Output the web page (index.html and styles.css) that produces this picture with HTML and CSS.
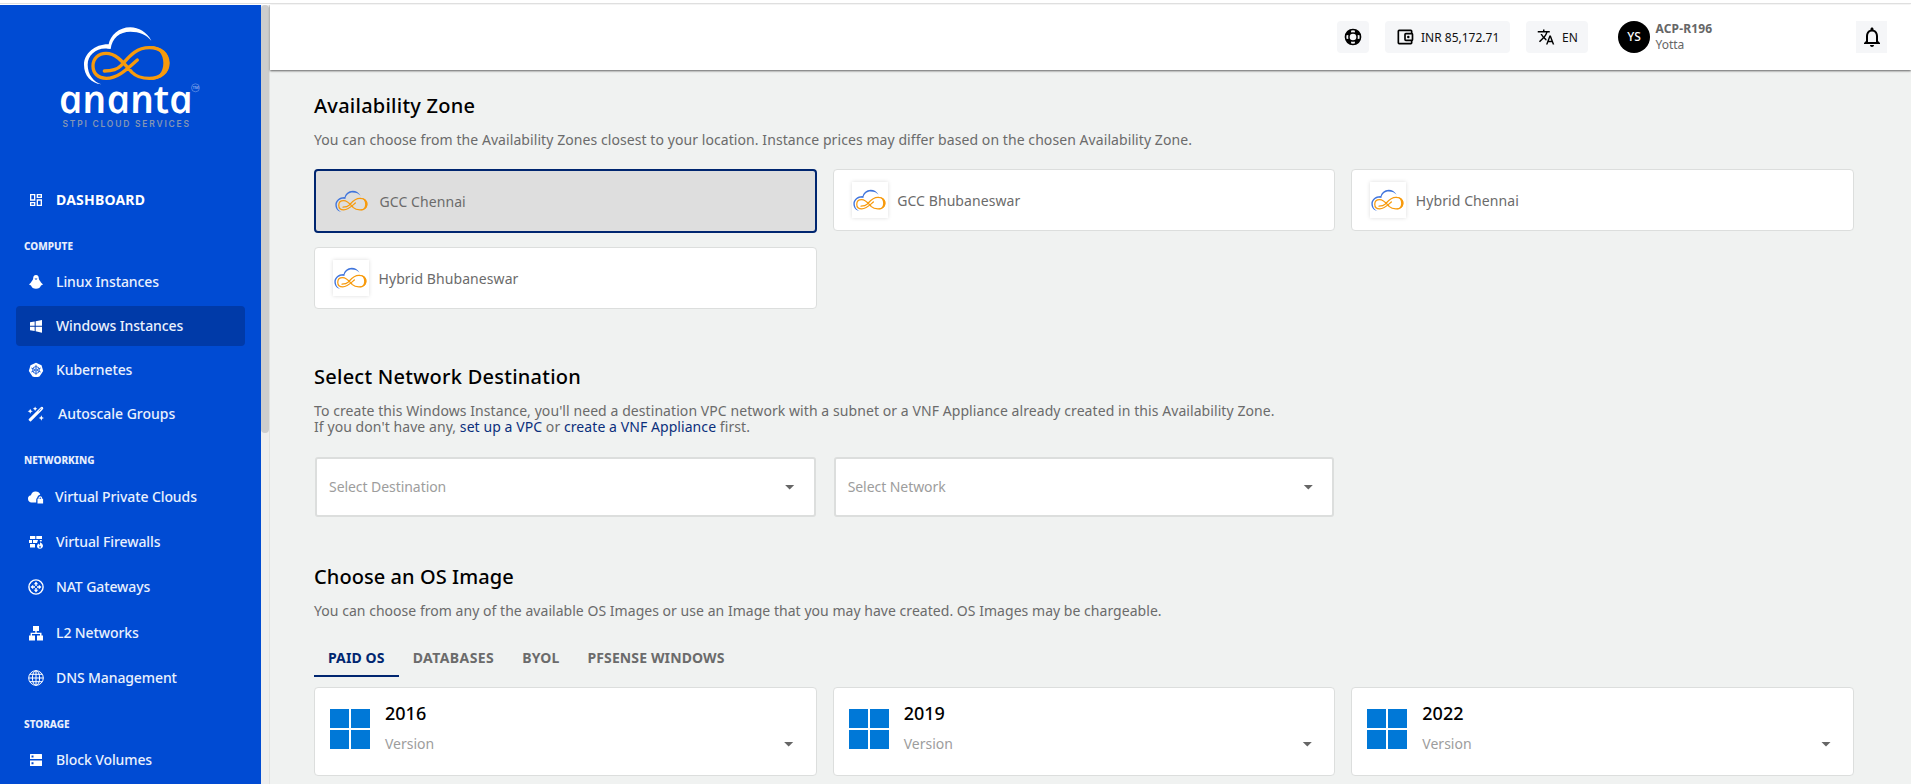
FILE: index.html
```html
<!DOCTYPE html>
<html lang="en">
<head>
<meta charset="utf-8">
<title>Ananta Cloud - Windows Instances</title>
<link rel="stylesheet" href="styles.css">
</head>
<body>
<svg class="defs" width="0" height="0">
  <symbol id="mark" viewBox="248 76 264 180">
    <path fill="var(--cloud)" d="M453 120C440 95 415 80 390 80C355 80 330 105 325 131C285 130 251 158 251 192C251 225 272 247 303 251C280 243 262 222 262 192C262 162 290 140 322 144L331 145C335 112 358 93 390 93C417 93 438 102 453 120Z"/>
    <path fill="none" stroke="#f79a0c" stroke-width="10" stroke-linecap="round" d="M411 178C385 200 355 233 318 233C292 233 278 217 278 196C278 174 294 158 317 158C350 158 372 190 395 215C408 228 425 233 447 233C480 233 502 213 502 187C502 160 480 141 447 141C405 141 385 170 362 195C350 208 335 211 312 211"/>
    <path fill="#f79a0c" d="M447 136C485 136 508 158 508 187C508 216 485 238 447 238C475 232 489 213 489 187C489 161 475 143 447 136Z"/>
  </symbol>
  <symbol id="win11" viewBox="0 0 40 40"><path fill="#0078d7" d="M0 0h19v19H0zM21 0h19v19H21zM0 21h19v19H0zM21 21h19v19H21z"/></symbol>
</svg>
<div class="topline"></div>
<div class="app">
  <aside class="sidebar">
    <div class="nav">
      <div class="brand">
        <svg class="brand-mark"><use href="#mark"/></svg>
        <svg class="brand-text" width="150" height="46" viewBox="55 84 150 46">
          <text class="wordmark" transform="translate(61 112.500) skewX(12)" x="0" y="0" textLength="134" lengthAdjust="spacingAndGlyphs">ananta</text>
          <circle cx="195.500" cy="87.800" r="4" fill="none" stroke="#7da2e8" stroke-width=".6"/>
          <text class="tm" x="195.500" y="89.300" text-anchor="middle">TM</text>
          <text class="tagline" x="62.500" y="126.500" textLength="126.500">STPI CLOUD SERVICES</text>
        </svg>
      </div>
      <a class="item dash"><svg viewBox="0 0 24 24"><path d="M19 5v2h-4V5h4M9 5v6H5V5h4m10 8v6h-4v-6h4M9 17v2H5v-2h4M21 3h-8v6h8V3zM11 3H3v10h8V3zm10 8h-8v10h8V11zm-10 4H3v6h8v-6z"/></svg>DASHBOARD</a>
      <h4 class="group compute">COMPUTE</h4>
      <div class="list">
        <a class="item"><svg viewBox="0 0 16 16"><path d="M8 1C6 1 5.200 2.500 5.200 4.200C5.200 6 3.500 7 3 8.500L1 10.500L3 11.500C3.600 13.500 5.500 14.800 8 14.800S12.400 13.500 13 11.500L15 10.500L13 8.500C12.500 7 10.800 6 10.800 4.200C10.800 2.500 10 1 8 1Z"/><path class="cut" d="M6.500 4.500h3L8 6z"/></svg>Linux Instances</a>
        <a class="item active"><svg viewBox="0 0 24 24"><path d="M3 6.500L10 5.200V11.500H3ZM11.500 4.900L21 3V11.500H11.500ZM3 13H10V19.500L3 18.500ZM11.500 13H21V22L11.500 20Z"/></svg>Windows Instances</a>
        <a class="item"><svg viewBox="0 0 16 16"><path d="M8 .8L13.500 3.300L15.200 9L11.500 14.500Q8 15.500 4.500 14.500L.8 9L2.500 3.300Z"/><g class="cutline"><circle cx="8" cy="8" r="3.400"/><circle cx="8" cy="8" r="1"/><path d="M8 2.800V7M8 9v3.800M3.300 6L7 7.600M9 8.400l3.700 1.600M12.700 6L9 7.600M7 8.400L3.300 10"/></g></svg>Kubernetes</a>
        <a class="item wand"><svg viewBox="0 0 18 18"><path d="M2.200 17.200L.9 15.900Q.4 15.300 1 14.700L13.800 2Q15.500.2 16.800 1.400T16 4.400L3.400 17.200Q2.800 17.700 2.200 17.200Z"/><path class="cutline" d="M12 5.800L15 2.800"/><path d="M2.500 3l.9 2 2 .9-2 .9-.9 2-.9-2-2-.9 2-.9zM8 .5l.8 1.700 1.700.8-1.700.8L8 5.500l-.8-1.700L5.500 3l1.700-.8zM15 10.500l.9 2.100 2.100.9-2.100.9-.9 2.100-.9-2.100-2.100-.9 2.100-.9z"/></svg>Autoscale Groups</a>
      </div>
      <h4 class="group">NETWORKING</h4>
      <div class="list wide">
        <a class="item vpc"><svg viewBox="0 0 16 16"><path d="M4 13.500A3.700 3.700 0 0 1 2.900 6.200A5 5 0 0 1 12.300 5.500Q9.500 6 9 9Q8.200 9.600 8.200 11v2.500Z"/><path d="M9.500 9.800h1V9a1.800 1.800 0 0 1 3.600 0v.8h1v4.700H9.500ZM11.500 9.800h1.600V9q-.8-1.200-1.600 0Z" fill-rule="evenodd"/></svg>Virtual Private Clouds</a>
        <a class="item"><svg viewBox="0 0 16 16"><path d="M2 2h5.300v3H2zM8.300 2H14v3H8.300zM1 6h3v3H1zM5 6h5L9 9H5zM11.500 6H14l-1 2zM2 10h5v3.500H2z"/><path d="M12 7.500Q12 9 14 9.500Q15.500 11 14.800 13Q13.800 15 11.800 14.800Q9 14.500 9 12Q9 10.500 10.500 9.500Q11 11 12 10.500Z"/><path class="cut" d="M12 11.500l1 1.500-1 1-1-1z"/></svg>Virtual Firewalls</a>
        <a class="item"><svg viewBox="0 0 16 16"><circle class="line" cx="8" cy="8" r="7.100"/><path d="M8 2.500l2.200 2.700H8.700V7H7.300V5.200H5.800ZM8 13.500l2.200-2.700H8.700V9H7.300v1.800H5.800ZM2.500 8l2.700-2.200v1.500H7v1.400H5.200v1.500ZM13.500 8l-2.700-2.200v1.500H9v1.400h1.800v1.500Z"/></svg>NAT Gateways</a>
        <a class="item"><svg viewBox="0 0 16 16"><path d="M5 1h6v5H8.700v1.700h4.800V10.500H15v5H9v-5h3V9H4v1.500h3v5H1v-5h1.600V7.700h4.700V6H5z"/></svg>L2 Networks</a>
        <a class="item"><svg viewBox="0 0 16 16"><g class="thin"><circle cx="8" cy="8" r="7.300"/><ellipse cx="8" cy="8" rx="3.600" ry="7.300"/><path d="M8 .7v14.600M.7 8h14.600M1.800 4.300h12.400M1.800 11.700h12.400"/></g></svg>DNS Management</a>
      </div>
      <h4 class="group storage">STORAGE</h4>
      <a class="item"><svg viewBox="0 0 16 16"><path fill-rule="evenodd" d="M2.500 2h11q.5 0 .5.500v4.500H2V2.500q0-.5.500-.5ZM3.500 3.500v2h2v-2zM2 8.500h12v5q0 .5-.5.500h-11q-.5 0-.5-.5ZM3.500 10.300v2h2v-2z"/></svg>Block Volumes</a>
    </div>
    <div class="scroll"><div class="thumb"></div></div>
  </aside>
  <div class="page">
    <header class="header">
      <div class="chip help"><svg width="20" height="20" viewBox="0 0 24 24"><path fill-rule="evenodd" d="M12 2a10 10 0 1 0 0 20a10 10 0 0 0 0-20ZM12 8a4 4 0 1 1 0 8a4 4 0 0 1 0-8Z"/><path fill="#f5f6f8" d="M9.500 4.400q2.500-.8 5 0L14 6.500q-2-.6-4 0ZM9.500 19.600q2.500.8 5 0l-.5-2.100q-2 .6-4 0ZM4.400 9.500q-.8 2.500 0 5l2.100-.5q-.6-2 0-4ZM19.600 9.500q.8 2.500 0 5l-2.100-.5q.6-2 0-4Z"/></svg></div>
      <div class="chip wallet"><svg width="20" height="20" viewBox="0 0 24 24"><path fill-rule="evenodd" d="M5 3h14q2 0 2 2v2q1 .5 1 2v6q0 1.500-1 2v2q0 2-2 2H5q-2 0-2-2V5q0-2 2-2ZM5 5v14h14v-2h-6q-2 0-2-2V9q0-2 2-2h6V5ZM13 9v6h7V9Z"/><circle cx="16" cy="12" r="1.500"/></svg>INR 85,172.71</div>
      <div class="chip lang"><svg width="18" height="18" viewBox="0 0 24 24"><path d="M12.870 15.070l-2.540-2.510.03-.03c1.740-1.940 2.980-4.170 3.710-6.530H17V4h-7V2H8v2H1v1.990h11.170C11.500 7.920 10.440 9.750 9 11.350 8.070 10.320 7.300 9.190 6.690 8h-2c.73 1.630 1.730 3.170 2.980 4.560l-5.090 5.020L4 19l5-5 3.110 3.110.76-2.040zM18.500 10h-2L12 22h2l1.120-3h4.750L21 22h2l-4.500-12zm-2.620 7l1.620-4.330L19.120 17h-3.240z"/></svg>EN</div>
      <div class="avatar">YS</div>
      <div class="user"><b>ACP-R196</b><span>Yotta</span></div>
      <div class="chip bell"><svg width="24" height="24" viewBox="0 0 24 24"><path d="M12 22c1.100 0 2-.9 2-2h-4c0 1.100.9 2 2 2zm6-6v-5c0-3.070-1.630-5.640-4.500-6.320V4c0-.83-.67-1.500-1.500-1.500s-1.500.67-1.500 1.500v.68C7.640 5.360 6 7.920 6 11v5l-2 2v1h16v-1l-2-2zm-2 1H8v-6c0-2.480 1.510-4.500 4-4.500s4 2.020 4 4.500v6z"/></svg></div>
    </header>
    <main class="main">
      <section class="zones-section">
        <h2>Availability Zone</h2>
        <p>You can choose from the Availability Zones closest to your location. Instance prices may differ based on the chosen Availability Zone.</p>
        <div class="grid zones">
          <div class="zone selected"><span class="tile"><svg><use href="#mark"/></svg></span>GCC Chennai</div>
          <div class="zone"><span class="tile"><svg><use href="#mark"/></svg></span>GCC Bhubaneswar</div>
          <div class="zone"><span class="tile"><svg><use href="#mark"/></svg></span>Hybrid Chennai</div>
          <div class="zone"><span class="tile"><svg><use href="#mark"/></svg></span>Hybrid Bhubaneswar</div>
        </div>
      </section>
      <section class="network-section">
        <h2>Select Network Destination</h2>
        <p>To create this Windows Instance, you'll need a destination VPC network with a subnet or a VNF Appliance already created in this Availability Zone.<br>If you don't have any, <a>set up a VPC</a> or <a>create a VNF Appliance</a> first.</p>
        <div class="grid selects">
          <div class="select">Select Destination<i class="caret"></i></div>
          <div class="select">Select Network<i class="caret"></i></div>
        </div>
      </section>
      <section class="os-section">
        <h2>Choose an OS Image</h2>
        <p>You can choose from any of the available OS Images or use an Image that you may have created. OS Images may be chargeable.</p>
        <div class="tabs"><span class="on">PAID OS</span><span class="db">DATABASES</span><span>BYOL</span><span>PFSENSE WINDOWS</span></div>
        <div class="grid">
          <div class="os"><svg width="40" height="40"><use href="#win11"/></svg><div class="os-body"><h3>2016</h3><div class="version">Version<i class="caret"></i></div></div></div>
          <div class="os"><svg width="40" height="40"><use href="#win11"/></svg><div class="os-body"><h3>2019</h3><div class="version">Version<i class="caret"></i></div></div></div>
          <div class="os"><svg width="40" height="40"><use href="#win11"/></svg><div class="os-body"><h3>2022</h3><div class="version">Version<i class="caret"></i></div></div></div>
        </div>
      </section>
    </main>
  </div>
</div>
</body>
</html>
```
FILE: styles.css
```css
* { box-sizing: border-box; }
body { margin: 0; height: 784px; overflow: hidden; background: #fff; font-family: "Noto Sans", sans-serif; font-size: 14px; color: #6b6b6b; }
h2, h3, h4, p { margin: 0; }
.defs { display: block; height: 0; }
.topline { height: 5px; border-top: 3px solid #fff; background: linear-gradient(#e0e0e0 50%, #fff 50%); }
.app { display: flex; height: 779px; }

.sidebar { display: flex; width: 270px; flex: none; border-right: 1px solid #dfe1e1; background: #004bd3; --bg: #004bd3; }
.nav { width: 261px; padding: 0 16px; overflow: hidden; }
.scroll { width: 8px; background: #eee; }
.thumb { height: 428px; border-radius: 4px; background: #cdcdcd; }
.brand { --cloud: #fff; height: 175px; padding: 21px 0 0 39px; display: flex; flex-direction: column; }
.brand-mark { width: 88px; height: 60px; margin-left: 27.500px; }
.brand-text { margin-top: -2px; overflow: visible; }
.wordmark { font: italic 600 39px "Open Sans", sans-serif; fill: #fff; }
.tm { font: 4px Inter, sans-serif; fill: #c4d5f7; }
.tagline { font: 600 8.500px Inter, sans-serif; fill: #8496b4; }
.item { display: flex; align-items: center; height: 40px; padding-left: 12px; gap: 12px; border-radius: 4px; color: #eaf1fd; font-weight: 500; font-size: 14px; line-height: 20px; letter-spacing: -.1px; white-space: nowrap; }
.item svg { width: 16px; height: 16px; flex: none; fill: #fff; overflow: visible; }
.item.dash { font-weight: 700; color: #fff; letter-spacing: .2px; }
.item.active { background: #003aa8; }
.item.wand { gap: 14px; letter-spacing: -.03px; }
.item.vpc { gap: 11px; }
.item .cut { fill: var(--bg); }
.item .cutline { fill: none; stroke: var(--bg); stroke-width: .8; }
.item .line { fill: none; stroke: #fff; stroke-width: 1.400; }
.item .thin { fill: none; stroke: #fff; stroke-width: 1; }
.group { margin: 18px 0 9px; padding-left: 8px; height: 16px; font-size: 10px; line-height: 16px; font-weight: 800; color: #e8effc; }
.group.compute { margin: 18px 0 8px; }
.group.storage { margin: 18px 0 8px; }
.list { display: flex; flex-direction: column; gap: 4px; }
.list.wide { gap: 5.200px; }

.page { flex: 1; display: flex; flex-direction: column; background: #f0f2f1; }
.header { height: 65px; flex: none; display: flex; align-items: flex-start; padding: 16px 24px 0 1067px; background: #fff; box-shadow: 0 1px 2px rgba(0,0,0,.6); color: #111; font-size: 12px; }
.chip { height: 32px; display: flex; align-items: center; border-radius: 4px; background: #f5f6f8; white-space: nowrap; }
.help { width: 32px; justify-content: center; margin-right: 16px; }
.wallet { width: 125px; padding-left: 10px; gap: 6px; margin-right: 16px; }
.lang { width: 62px; padding-left: 11px; gap: 7px; margin-right: 30px; }
.avatar { width: 32px; height: 32px; border-radius: 50%; background: #000; color: #fff; font-weight: 500; line-height: 32px; text-align: center; }
.user { display: flex; flex-direction: column; margin-left: 5.500px; line-height: 16px; color: #666; }
.user b { letter-spacing: .15px; }
.bell { width: 31px; justify-content: center; margin-left: auto; border-radius: 0; }

.main { padding: 23px 57px 0 44px; }
h2 { font-size: 20px; line-height: 26px; font-weight: 500; letter-spacing: .25px; color: #000; }
p { margin-top: 13px; font-size: 14px; line-height: 16px; letter-spacing: .073px; white-space: nowrap; }
p a { color: #0b2f7c; }
.grid { display: grid; grid-template-columns: repeat(3, 1fr); column-gap: 16px; align-items: start; }
.zones { margin-top: 21px; row-gap: 14px; }
.zone { --cloud: #3f74dc; height: 62px; display: flex; align-items: center; gap: 9.500px; padding-left: 18px; border: 1px solid #dcdedd; border-radius: 4px; background: #fff; letter-spacing: .08px; }
.zone.selected { height: 64px; border: 2px solid #002670; background: #dedede; }
.tile { width: 36px; height: 36px; display: flex; align-items: center; justify-content: center; box-shadow: 0 0 4px rgba(0,0,0,.14); }
.selected .tile { box-shadow: none; }
.tile svg { width: 33px; height: 23px; margin-right: 1px; }
.network-section { margin-top: 55px; margin-bottom: 47px; }
.selects { margin-top: 22px; }
.select { height: 60px; margin: 0 1px; display: flex; align-items: center; justify-content: space-between; padding: 0 19px 0 12px; border: 2px solid #dcdedd; border-radius: 3px; background: #fff; color: #9d9d9d; line-height: 18px; letter-spacing: -.06px; }
.caret { width: 10px; height: 5px; background: #666; clip-path: polygon(0 0, 100% 0, 50% 100%); }
.os-section h2 { letter-spacing: .07px; }
.os-section p { letter-spacing: .035px; }
.tabs { display: flex; margin: 20px 0 10px; font-weight: 700; letter-spacing: .12px; }
.tabs span { height: 38px; padding: 0 14px; line-height: 38px; border-bottom: 2px solid transparent; }
.tabs .on { color: #002670; border-color: #002670; }
.tabs .db { letter-spacing: .43px; }
.os { height: 89px; display: flex; padding: 21px 22px 0 15px; border: 1px solid #dcdedd; border-radius: 4px; background: #fff; }
.os-body { flex: 1; margin-left: 15px; }
h3 { margin-top: -8px; font-size: 18px; line-height: 24px; font-weight: 500; color: #000; }
.version { display: flex; align-items: center; justify-content: space-between; margin-top: 9px; line-height: 20px; color: #9d9d9d; }
```
